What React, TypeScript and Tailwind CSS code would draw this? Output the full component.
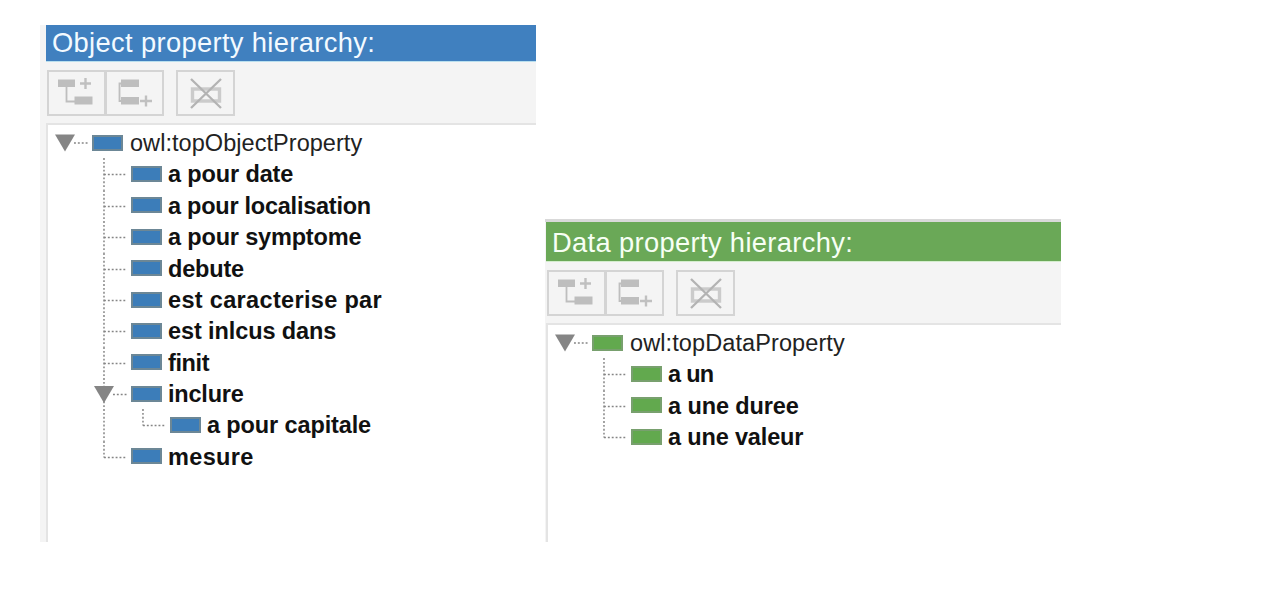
type Tone = "object" | "data";
type Item = { label: string; depth: number; open?: boolean; tracking: string; last?: boolean; guide?: boolean };

const objectItems: Item[] = [
  { label: "a pour date", depth: 1, tracking: "tracking-[-0.13px]" },
  { label: "a pour localisation", depth: 1, tracking: "tracking-[-0.25px]" },
  { label: "a pour symptome", depth: 1, tracking: "tracking-[-0.17px]" },
  { label: "debute", depth: 1, tracking: "tracking-[-0.18px]" },
  { label: "est caracterise par", depth: 1, tracking: "tracking-[0.33px]" },
  { label: "est inlcus dans", depth: 1, tracking: "tracking-[-0.1px]" },
  { label: "finit", depth: 1, tracking: "tracking-[-0.4px]" },
  { label: "inclure", depth: 1, open: true, tracking: "tracking-[-0.2px]" },
  { label: "a pour capitale", depth: 2, last: true, guide: true, tracking: "tracking-[-0.12px]" },
  { label: "mesure", depth: 1, last: true, tracking: "tracking-[0.35px]" },
];

const dataItems: Item[] = [
  { label: "a un", depth: 1, tracking: "tracking-[-0.7px]" },
  { label: "a une duree", depth: 1, tracking: "tracking-[-0.1px]" },
  { label: "a une valeur", depth: 1, last: true, tracking: "tracking-[-0.16px]" },
];

function Swatch({ tone }: { tone: Tone }) {
  return (
    <span
      className={
        tone === "object"
          ? "h-[16px] w-[31px] shrink-0 border-2 border-[#6c8796] bg-[#3c7db9]"
          : "h-[16px] w-[31px] shrink-0 border-2 border-[#78a06e] bg-[#62a94e]"
      }
    />
  );
}

const dots = { stroke: "#858585", strokeWidth: 1.5, strokeDasharray: "1.9 1.98" };

function Connector({ item }: { item: Item }) {
  const x = item.depth === 1 ? 56 : 95;
  const width = item.depth === 1 ? 83 : 122;
  return (
    <svg className="h-full shrink-0" width={width} height="31.4" viewBox={`0 0 ${width} 31.4`} fill="none">
      {item.guide && <line x1="56" y1="0" x2="56" y2="31.4" {...dots} />}
      <line x1={x} y1="0" x2={x} y2={item.last ? 16.5 : 31.4} {...dots} />
      <line x1={item.open ? x + 9 : x} y1="16.5" x2={x + 23} y2="16.5" {...dots} />
      {item.open && <path d={`M${x - 10} 8h20l-10 17z`} fill="#858585" />}
    </svg>
  );
}

function Tree({ tone, root, rootTracking, items }: { tone: Tone; root: string; rootTracking: string; items: Item[] }) {
  return (
    <div className="flex-1 border-t-2 border-l-2 border-[#e4e4e4] bg-white pt-[2px] text-[23.5px] leading-[31.4px] text-[#222]">
      <div className="flex h-[31.4px] items-center">
        <svg className="shrink-0" width="44" height="31.4" viewBox="0 0 44 31.4" fill="none">
          <path d="M7 7.5h20L17 24.5z" fill="#858585" />
          <line x1="26" y1="16" x2="41" y2="16" {...dots} />
        </svg>
        <Swatch tone={tone} />
        <span className={`pt-[2px] pl-[7px] whitespace-nowrap ${rootTracking}`}>{root}</span>
      </div>
      {items.map((item) => (
        <div key={item.label} className="flex h-[31.39px] items-center font-bold text-[#111]">
          <Connector item={item} />
          <Swatch tone={tone} />
          <span className={`pt-[2px] pl-[6px] whitespace-nowrap ${item.tracking}`}>{item.label}</span>
        </div>
      ))}
    </div>
  );
}

function Toolbar() {
  const button = "flex h-[46px] w-[59px] shrink-0 items-center justify-center border-2 border-[#d4d4d4] bg-[#f4f4f4]";
  return (
    <div className="flex pl-px">
      <button className={button} aria-label="Add sub property">
        <svg className="shrink-0" width="55" height="42" viewBox="0 0 55 42" fill="none">
          <path d="M9 7.5h17V15H9zM25.500 24.500h18v8h-18z" fill="#bebebe" />
          <path d="M17.500 15v14.500h9" stroke="#bebebe" strokeWidth="1.8" />
          <path d="M31 11.500h11M36.500 6v11" stroke="#c0c0c0" strokeWidth="2.400" />
        </svg>
      </button>
      <button className={`${button} -ml-px`} aria-label="Add sibling property">
        <svg className="shrink-0" width="55" height="42" viewBox="0 0 55 42" fill="none">
          <path d="M14 7.5h18V15H14zM14 25h18v7.500H14z" fill="#bebebe" />
          <path d="M15 11.500h-2.500V29H15" stroke="#bebebe" strokeWidth="1.8" />
          <path d="M33 29h12M39 23.500v11" stroke="#c0c0c0" strokeWidth="2.400" />
        </svg>
      </button>
      <button className={`${button} ml-[12px]`} aria-label="Delete property">
        <svg className="shrink-0" width="55" height="42" viewBox="0 0 55 42" fill="none">
          <path d="M14.500 17h27v12h-27z" stroke="#cbcbcb" strokeWidth="3.400" />
          <path d="M13 7l30 29M43 7L13 36" stroke="#b3b3b3" strokeWidth="2.300" />
        </svg>
      </button>
    </div>
  );
}

export default function App() {
  return (
    <main className="flex h-[610px] w-[1278px] items-start bg-white font-['Liberation_Sans',sans-serif]">
      <section className="mt-[25px] ml-[40px] flex h-[517px] w-[496px] flex-col bg-[#f4f4f4] pl-[6px]">
        <h2 className="h-[37px] border-b border-[#b9dfee] bg-[#4080bf] pl-[6px] text-[27.3px] leading-[35px] tracking-[0.35px] whitespace-nowrap text-[#f3faff]">
          Object property hierarchy:
        </h2>
        <div className="flex h-[61px] flex-col pt-[8px]">
          <Toolbar />
        </div>
        <Tree tone="object" root="owl:topObjectProperty" rootTracking="tracking-[0.05px]" items={objectItems} />
      </section>
      <section className="mt-[219px] ml-[9px] flex h-[323px] w-[516px] flex-col border-t-[3px] border-[#d9d9d9] bg-[#f4f4f4] pl-px">
        <h2 className="h-[40px] border-b border-[#d4edcd] bg-[#6aa857] pl-[6px] text-[27.3px] leading-[41px] tracking-[0.35px] whitespace-nowrap text-[#f7fff4]">
          Data property hierarchy:
        </h2>
        <div className="flex h-[61px] flex-col pt-[8px]">
          <Toolbar />
        </div>
        <Tree tone="data" root="owl:topDataProperty" rootTracking="tracking-[0.1px]" items={dataItems} />
      </section>
    </main>
  );
}
